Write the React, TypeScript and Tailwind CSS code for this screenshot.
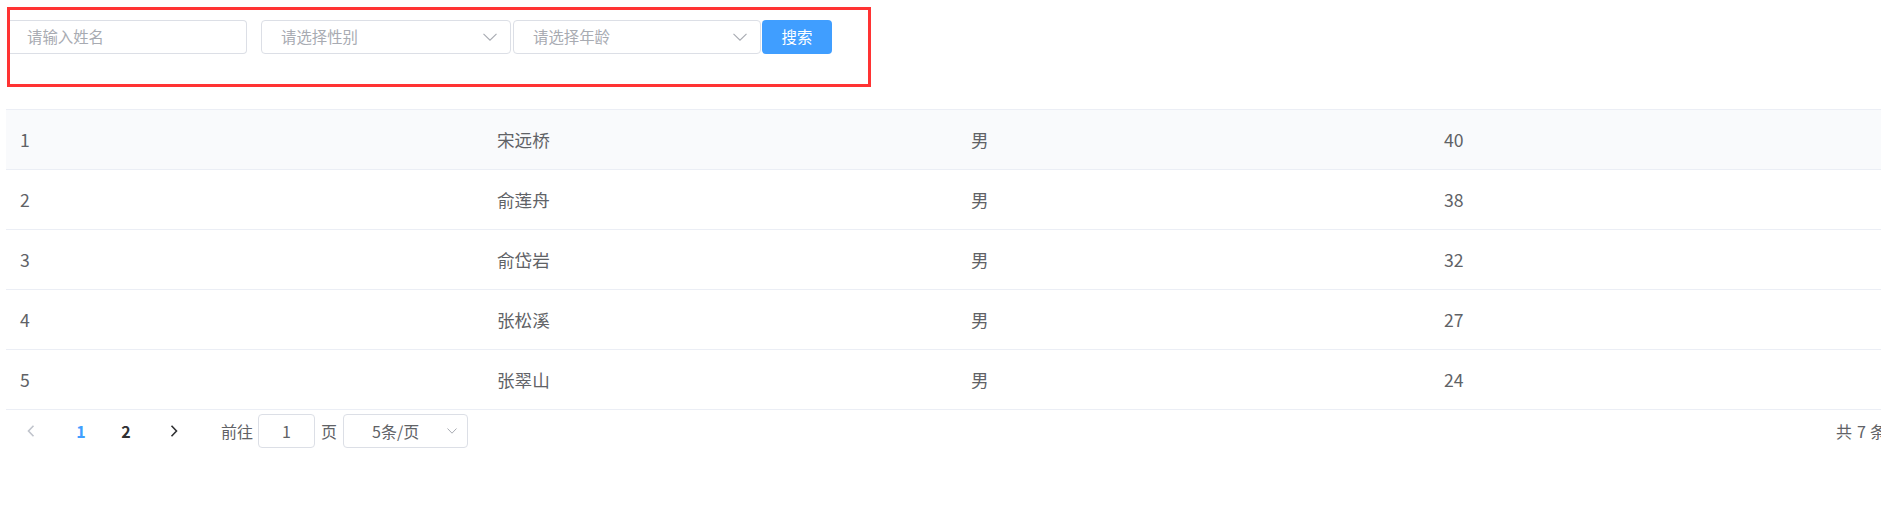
import React from 'react';

const rows = [
  { id: '1', name: '宋远桥', sex: '男', age: 40 },
  { id: '2', name: '俞莲舟', sex: '男', age: 38 },
  { id: '3', name: '俞岱岩', sex: '男', age: 32 },
  { id: '4', name: '张松溪', sex: '男', age: 27 },
  { id: '5', name: '张翠山', sex: '男', age: 24 },
];

function ArrowDown() {
  return (
    <svg width="14" height="8" viewBox="0 0 14 8" fill="none" stroke="#a8abb2" strokeWidth="1.1">
      <path d="M0.5 0.8 L7 7.2 L13.5 0.8" />
    </svg>
  );
}

function Chevron({ dir, color }: { dir: 'left' | 'right'; color: string }) {
  return (
    <svg width="8" height="12" viewBox="0 0 8 12" fill="none" stroke={color} strokeWidth="1.6">
      <path d={dir === 'left' ? 'M6.5 0.8 L1.5 6 L6.5 11.2' : 'M1.5 0.8 L6.5 6 L1.5 11.2'} />
    </svg>
  );
}

function SelectBox({ placeholder, width }: { placeholder: string; width: string }) {
  return (
    <div className={`${width} h-[34px] border border-[#dcdfe6] rounded-[4px] flex items-center justify-between pl-[19px] pr-[13px]`}>
      <span className="text-[15.4px] text-[#a8abb2] leading-none">{placeholder}</span>
      <ArrowDown />
    </div>
  );
}

export default function App() {
  return (
    <div
      className="w-[1881px] h-[526px] overflow-hidden bg-white text-[#606266]"
      style={{ fontFamily: '"Noto Sans CJK SC", "Noto Sans", sans-serif' }}
    >
      <div className="w-[1902px]">
        <div className="pt-[7px] pl-[7px]">
          <div className="w-[864px] h-[80px] border-[3px] border-[#f33] pt-[10px]">
            <div className="flex items-center">
              <div className="w-[237px] h-[34px] border border-l-0 border-[#dcdfe6] rounded-r-[4px] flex items-center pl-[17px]">
                <span className="text-[15.4px] text-[#a8abb2] leading-none">请输入姓名</span>
              </div>
              <div className="ml-[14px]">
                <SelectBox placeholder="请选择性别" width="w-[250px]" />
              </div>
              <div className="ml-[2px]">
                <SelectBox placeholder="请选择年龄" width="w-[248px]" />
              </div>
              <button className="ml-[1px] w-[70px] h-[34px] rounded-[4px] bg-[#409eff] text-white text-[15.4px] leading-none flex items-center justify-center">
                搜索
              </button>
            </div>
          </div>
        </div>

        <div className="ml-[6px] mt-[22px] w-[1896px]">
          <div className="border-t border-[#ebeef5]">
            {rows.map((r, i) => (
              <div
                key={r.id}
                className={`grid grid-cols-4 h-[60px] border-b border-[#ebeef5] text-[17.6px] leading-none ${i === 0 ? 'bg-[#f9fafc]' : 'bg-white'}`}
              >
                <div className="flex items-center pl-[14px]">{r.id}</div>
                <div className="flex items-center pl-[17px]">{r.name}</div>
                <div className="flex items-center pl-[17px]">{r.sex}</div>
                <div className="flex items-center pl-[16px]">{r.age}</div>
              </div>
            ))}
          </div>

          <div className="flex items-center h-[34px] mt-[4px] text-[16px] leading-none">
            <div className="ml-[8px] w-[34px] h-[34px] flex items-center justify-center">
              <Chevron dir="left" color="#c0c4cc" />
            </div>
            <div className="ml-[16px] w-[34px] h-[34px] flex items-center justify-center font-bold text-[#409eff]">1</div>
            <div className="ml-[11px] w-[34px] h-[34px] flex items-center justify-center font-bold text-[#303133]">2</div>
            <div className="ml-[14px] w-[34px] h-[34px] flex items-center justify-center">
              <Chevron dir="right" color="#303133" />
            </div>
            <span className="ml-[30px]">前往</span>
            <div className="ml-[5px] w-[57px] h-[34px] border border-[#dcdfe6] rounded-[4px] flex items-center justify-center">1</div>
            <span className="ml-[6px]">页</span>
            <div className="ml-[6px] w-[125px] h-[34px] border border-[#dcdfe6] rounded-[4px] flex items-center justify-between pl-[28px] pr-[10px]">
              <span>5条/页</span>
              <svg width="10" height="6" viewBox="0 0 10 6" fill="none" stroke="#a8abb2" strokeWidth="1">
                <path d="M0.5 0.5 L5 5.2 L9.5 0.5" />
              </svg>
            </div>
            <div className="ml-auto pr-[16px] flex items-center">
              <span>共</span>
              <span className="ml-[5px]">7</span>
              <span className="ml-[4px]">条</span>
            </div>
          </div>
        </div>
      </div>
    </div>
  );
}
